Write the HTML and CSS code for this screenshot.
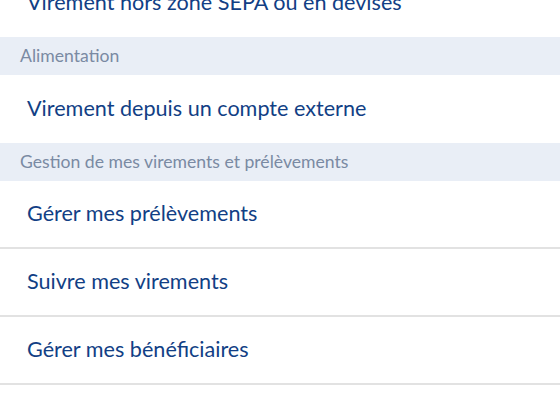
FILE: index.html
```html
<!DOCTYPE html>
<html lang="fr">
<head>
<meta charset="utf-8">
<link rel="stylesheet" href="styles.css">
</head>
<body>
<div class="list">
  <div class="row row-first"><span class="label">Virement hors zone SEPA ou en devises</span></div>
  <div class="section">Alimentation</div>
  <div class="row"><span class="label">Virement depuis un compte externe</span></div>
  <div class="section">Gestion de mes virements et prélèvements</div>
  <div class="row bordered"><span class="label">Gérer mes prélèvements</span></div>
  <div class="row bordered"><span class="label">Suivre mes virements</span></div>
  <div class="row bordered"><span class="label">Gérer mes bénéficiaires</span></div>
</div>
</body>
</html>
```

FILE: styles.css
```css
html, body {
  margin: 0;
  padding: 0;
  background: #ffffff;
}
body {
  font-family: Lato, "Liberation Sans", sans-serif;
  overflow: hidden;
  height: 420px;
}
.list {
  display: flex;
  flex-direction: column;
  margin-top: -31px;
}
.row {
  height: 68px;
  display: flex;
  align-items: center;
  padding-left: 27px;
  padding-bottom: 3px;
  box-sizing: border-box;
}
.row.bordered {
  border-bottom: 2px solid #e2e2e2;
}
.label {
  font-size: 21.6px;
  color: #123f85;
}
.section {
  height: 38px;
  display: flex;
  align-items: center;
  padding-left: 20px;
  padding-bottom: 1px;
  box-sizing: border-box;
  background: #e9eef6;
  color: #7a8aa3;
  font-size: 17.6px;
}
```
